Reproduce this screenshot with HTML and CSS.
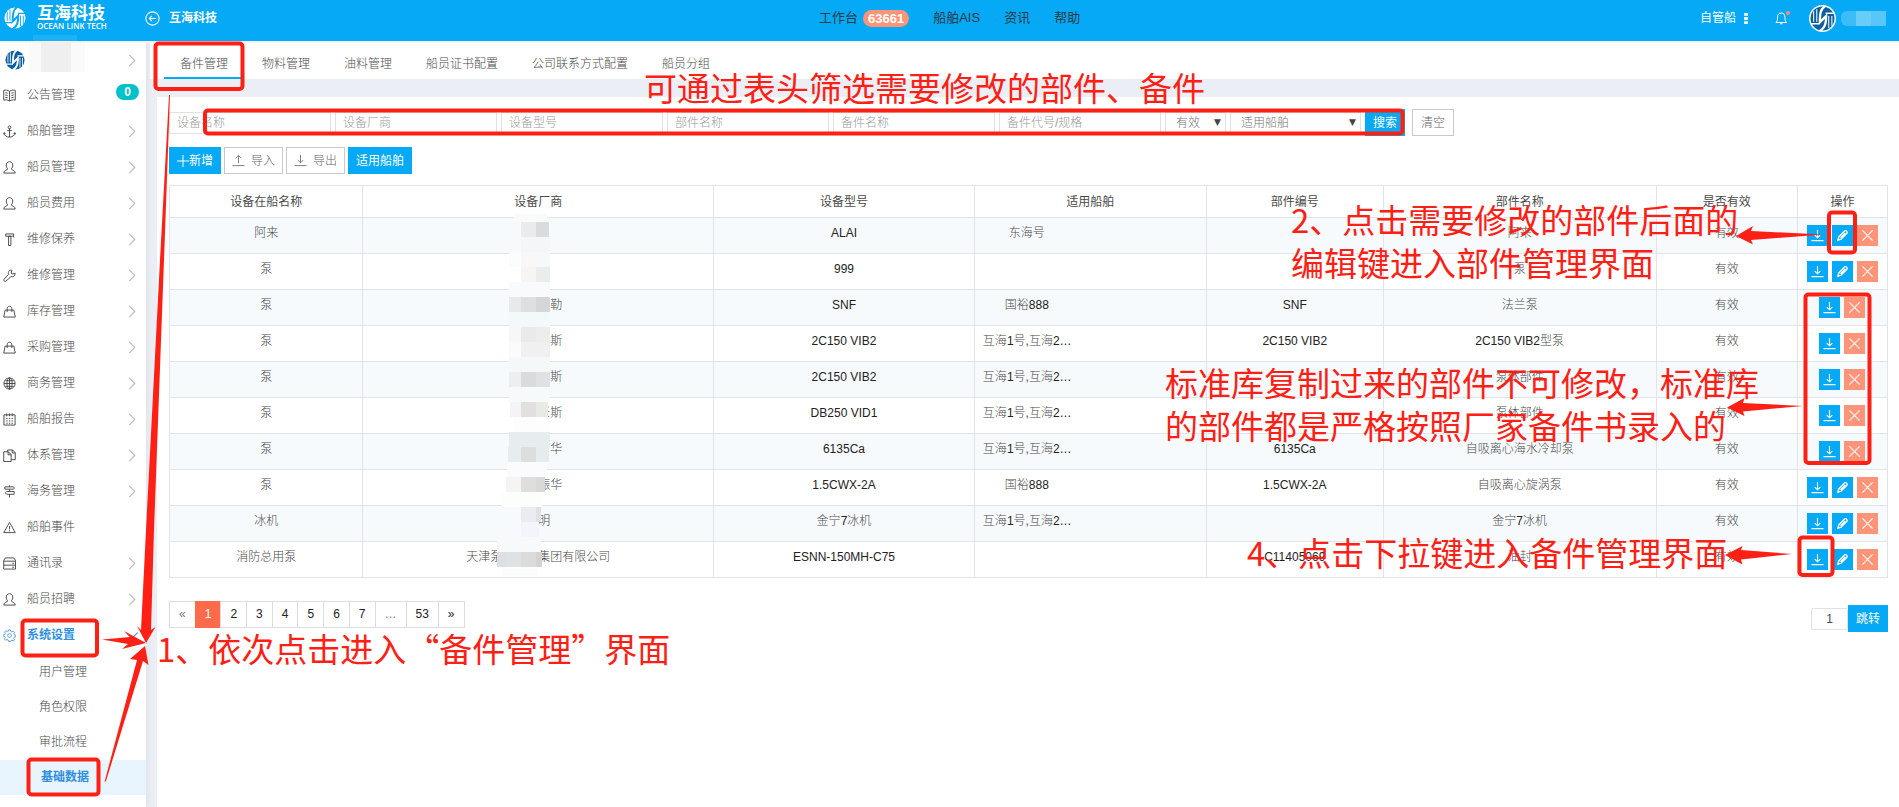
FILE: index.html
```
<!DOCTYPE html>
<html lang="zh-CN">
<head>
<meta charset="utf-8">
<title>互海科技</title>
<link rel="stylesheet" href="styles.css">
</head>
<body>
<svg class="defs" aria-hidden="true">
  <defs>
    <symbol id="logo" viewBox="0 0 24 24">
      <circle class="logo-disc" cx="12" cy="12" r="11.5"/>
      <path class="logo-line" d="M14.500 0C10 3 9.500 7 9.500 15.500L15.500 9.500C15.500 17 14.500 21 9.500 24" stroke-width="2.200"/>
      <path class="logo-line" d="M3.500 5v10M6.500 3v12M18 9.500V21M21 9.500V19" stroke-width="1"/>
      <path class="logo-line" d="M1 17h8M15 7h8" stroke-width="1.400"/>
    </symbol>
    <symbol id="chev" viewBox="0 0 8 14"><path d="M1 1l6 6-6 6"/></symbol>
    <symbol id="i-book" viewBox="0 0 14 14"><path d="M7 2.500C5 1 3 1 .8 1.500v10.500C3 11.500 5 11.500 7 13M7 2.500C9 1 11 1 13.200 1.500v10.500C11 11.500 9 11.500 7 13M7 2.500V13M2.500 4l2.500.4M2.500 6.500l2.500.4M2.500 9l2.500.4M11.500 4L9 4.400M11.500 6.500L9 6.900M11.500 9L9 9.400"/></symbol>
    <symbol id="i-anchor" viewBox="0 0 14 14"><circle cx="7" cy="2.500" r="1.500"/><path d="M7 4v9M4.500 6h5M1 8.500c.5 3 3 4.500 6 4.500s5.500-1.500 6-4.500M.5 10l.7-1.800 1.600 1.200M13.500 10l-.7-1.800-1.600 1.200"/></symbol>
    <symbol id="i-user" viewBox="0 0 14 14"><path d="M5.200 8.500C4 7.500 3.500 6 3.500 4.300 3.500 2 5 .8 7 .8s3.500 1.200 3.500 3.500c0 1.700-.5 3.200-1.700 4.200.3 1.300 4.400 1.200 4.400 4.500H.8c0-3.300 4.100-3.200 4.400-4.500z"/></symbol>
    <symbol id="i-hammer" viewBox="0 0 14 14"><path d="M3 1h8.500v3.500C11 3 10 3.500 9.500 3.500H3zM6 3.500h2.500V13.500H6z"/></symbol>
    <symbol id="i-wrench" viewBox="0 0 14 14"><path d="M9.500 1.200L8.800 4.500l.9.900 3.400-.8c.2 2.500-2 4.400-4.600 3.600L3.300 13c-1.500 1-3-.7-2.200-2L6 5.800C5 3 7 .8 9.500 1.200z"/></symbol>
    <symbol id="i-bag" viewBox="0 0 14 14"><path d="M2.300 5.500h9.400l1.500 7.500H.8zM4.500 7.500V4c0-3.500 5-3.500 5 0v3.500"/></symbol>
    <symbol id="i-globe" viewBox="0 0 14 14"><circle cx="7" cy="7" r="6"/><ellipse cx="7" cy="7" rx="2.800" ry="6"/><path d="M7 1v12M1 7h12M2.500 4h9M2.500 10h9"/></symbol>
    <symbol id="i-cal" viewBox="0 0 14 14"><path d="M1 2h12v11H1zM4 .5v3M7 .5v3M10 .5v3"/><path d="M3.500 6h1.500M6.300 6h1.500M9.200 6h1.500M3.500 8.500h1.500M6.300 8.500h1.500M9.200 8.500h1.500M3.500 11h1.500M6.300 11h1.500M9.200 11h1.500"/></symbol>
    <symbol id="i-files" viewBox="0 0 14 14"><path d="M.8 3h5l3 3v7.500h-8zM5.500 3v3.200h3.200M5 3V1h5.200l3 3v7.500H9M10 1v3.200h3.200"/></symbol>
    <symbol id="i-sign" viewBox="0 0 14 14"><path d="M2 2h9l1.500 1.200L11 4.500H2zM12 7H4L2.500 8.500 4 10h8zM7 .5V2M7 4.500V7M7 10v3.500"/></symbol>
    <symbol id="i-warn" viewBox="0 0 14 14"><path d="M7 1.500L13.200 12.500H.8zM7 5.500v3.500M7 10v1.200"/></symbol>
    <symbol id="i-server" viewBox="0 0 14 14"><path d="M2.500 1h9l2 2.500v9.500H.8V3.500zM.8 4.500h12.500M.8 8.800h12.500M10 6.700h2M10 11h2"/></symbol>
    <symbol id="i-gear" viewBox="0 0 14 14"><circle cx="7" cy="7" r="2"/><path d="M6 1h2l.4 1.700 1.200.5 1.500-.9 1.400 1.400-.9 1.500.5 1.200 1.700.4v1.600l-1.700.4-.5 1.200.9 1.500-1.400 1.400-1.500-.9-1.200.5L8 13.500H6l-.4-1.700-1.200-.5-1.500.9-1.400-1.400.9-1.500-.5-1.200L.4 7.900V6.300l1.700-.4.500-1.200-.9-1.500 1.400-1.400 1.500.9 1.200-.5z"/></symbol>
    <symbol id="i-down" viewBox="0 0 14 14"><path d="M7 1v8.500M4 6.500l3 3 3-3M.5 12.500h13"/></symbol>
    <symbol id="i-up" viewBox="0 0 14 14"><path d="M7 10V1.500M4 4.500l3-3 3 3M.5 12.500h13"/></symbol>
    <symbol id="i-edit" viewBox="0 0 14 14"><path d="M2 12l1-3.500L9.500 2c1-1 3.300 1.300 2.400 2.400L5.500 11zM5 9.300L10 4.300" stroke-width="1.500"/></symbol>
    <symbol id="i-x" viewBox="0 0 14 14"><path d="M1.500 1.500l11 11M12.500 1.500l-11 11"/></symbol>
  </defs>
</svg>

<header class="topbar">
  <div class="brand">
    <svg class="logo logo-light"><use href="#logo"/></svg>
    <div class="brand-text"><strong>互海科技</strong><small>OCEAN LINK TECH</small></div>
  </div>
  <a class="back" href="#">
    <svg viewBox="0 0 14 14"><circle cx="7" cy="7" r="6.200"/><path d="M10.500 7H4M6.500 4.500L4 7l2.500 2.500"/></svg>
    互海科技
  </a>
  <nav class="topnav">
    <a href="#">工作台<span class="count">63661</span></a>
    <a href="#">船舶AIS</a>
    <a href="#">资讯</a>
    <a href="#">帮助</a>
  </nav>
  <div class="account">
    <span class="fleet">自管船</span>
    <svg class="dots" viewBox="0 0 4 14"><path d="M0 1h4v3H0zM0 5.500h4v3H0zM0 10h4v3H0z"/></svg>
    <svg class="bell" viewBox="0 0 15 14"><path d="M1 11.500h10.500c-1.300-1.500-1.500-2.500-1.500-5C10 3.500 8.500 2 6.200 2S2.500 3.500 2.500 6.500c0 2.500-.2 3.500-1.500 5zM5 12.800h2.500"/><circle cx="13" cy="2" r="2"/></svg>
    <span class="avatar"><svg class="logo logo-dark"><use href="#logo"/></svg></span>
    <span class="hidden-name"><i></i><i></i><i></i></span>
  </div>
</header>

<div class="layout">
  <aside class="sidebar">
    <div class="profile"><svg class="logo logo-dark"><use href="#logo"/></svg><svg class="chev"><use href="#chev"/></svg></div>
    <nav class="menu">
      <a href="#"><svg class="ico"><use href="#i-book"/></svg>公告管理<span class="pill">0</span></a>
      <a href="#"><svg class="ico"><use href="#i-anchor"/></svg>船舶管理<svg class="chev"><use href="#chev"/></svg></a>
      <a href="#"><svg class="ico"><use href="#i-user"/></svg>船员管理<svg class="chev"><use href="#chev"/></svg></a>
      <a href="#"><svg class="ico"><use href="#i-user"/></svg>船员费用<svg class="chev"><use href="#chev"/></svg></a>
      <a href="#"><svg class="ico"><use href="#i-hammer"/></svg>维修保养<svg class="chev"><use href="#chev"/></svg></a>
      <a href="#"><svg class="ico"><use href="#i-wrench"/></svg>维修管理<svg class="chev"><use href="#chev"/></svg></a>
      <a href="#"><svg class="ico"><use href="#i-bag"/></svg>库存管理<svg class="chev"><use href="#chev"/></svg></a>
      <a href="#"><svg class="ico"><use href="#i-bag"/></svg>采购管理<svg class="chev"><use href="#chev"/></svg></a>
      <a href="#"><svg class="ico"><use href="#i-globe"/></svg>商务管理<svg class="chev"><use href="#chev"/></svg></a>
      <a href="#"><svg class="ico"><use href="#i-cal"/></svg>船舶报告<svg class="chev"><use href="#chev"/></svg></a>
      <a href="#"><svg class="ico"><use href="#i-files"/></svg>体系管理<svg class="chev"><use href="#chev"/></svg></a>
      <a href="#"><svg class="ico"><use href="#i-sign"/></svg>海务管理<svg class="chev"><use href="#chev"/></svg></a>
      <a href="#"><svg class="ico"><use href="#i-warn"/></svg>船舶事件</a>
      <a href="#"><svg class="ico"><use href="#i-server"/></svg>通讯录<svg class="chev"><use href="#chev"/></svg></a>
      <a href="#"><svg class="ico"><use href="#i-user"/></svg>船员招聘<svg class="chev"><use href="#chev"/></svg></a>
      <a class="open" href="#"><svg class="ico"><use href="#i-gear"/></svg>系统设置<svg class="chev"><use href="#chev"/></svg></a>
    </nav>
    <nav class="submenu">
      <a href="#">用户管理</a>
      <a href="#">角色权限</a>
      <a href="#">审批流程</a>
      <a class="current" href="#">基础数据</a>
    </nav>
  </aside>

  <main class="main">
    <nav class="tabs">
      <a class="current" href="#">备件管理</a>
      <a href="#">物料管理</a>
      <a href="#">油料管理</a>
      <a href="#">船员证书配置</a>
      <a href="#">公司联系方式配置</a>
      <a href="#">船员分组</a>
    </nav>
    <section class="panel">
      <form class="filters">
        <input type="text" aria-label="设备名称" placeholder="设备名称">
        <input type="text" aria-label="设备厂商" placeholder="设备厂商">
        <input type="text" aria-label="设备型号" placeholder="设备型号">
        <input type="text" aria-label="部件名称" placeholder="部件名称">
        <input type="text" aria-label="备件名称" placeholder="备件名称">
        <input type="text" aria-label="备件代号/规格" placeholder="备件代号/规格">
        <span class="pick pick-state"><select aria-label="是否有效"><option>有效</option></select></span>
        <span class="pick pick-ship"><select aria-label="适用船舶"><option>适用船舶</option></select></span>
        <button class="btn primary" type="button">搜索</button>
        <button class="btn clear" type="button">清空</button>
      </form>
      <div class="toolbar">
        <button class="btn primary" type="button"><svg class="plus" viewBox="0 0 12 12"><path d="M6 0v12M0 6h12"/></svg>新增</button>
        <button class="btn" type="button"><svg class="ico"><use href="#i-up"/></svg>导入</button>
        <button class="btn" type="button"><svg class="ico"><use href="#i-down"/></svg>导出</button>
        <button class="btn primary" type="button">适用船舶</button>
      </div>
      <table class="parts">
        <colgroup><col class="c1"><col class="c2"><col class="c3"><col class="c4"><col class="c5"><col class="c6"><col class="c7"><col class="c8"></colgroup>
        <thead>
          <tr><th>设备在船名称</th><th>设备厂商</th><th>设备型号</th><th>适用船舶</th><th>部件编号</th><th>部件名称</th><th>是否有效</th><th>操作</th></tr>
        </thead>
        <tbody id="rows"></tbody>
      </table>
      <div class="footer">
        <nav class="pager">
          <a class="mute" href="#">«</a><a class="current" href="#">1</a><a href="#">2</a><a href="#">3</a><a href="#">4</a><a href="#">5</a><a href="#">6</a><a href="#">7</a><span class="mute">…</span><a href="#">53</a><a href="#">»</a>
        </nav>
        <form class="jump"><input type="text" aria-label="页码" value="1"><button class="btn primary" type="button">跳转</button></form>
      </div>
    </section>
  </main>
</div>

<svg class="overlay" viewBox="0 0 1899 807" aria-hidden="true">
  <g id="mosaic"></g>
  <g class="frames">
    <rect x="155.500" y="43.500" width="87" height="45.500" rx="3"/>
    <rect x="205" y="110.500" width="1197.500" height="23" rx="3"/>
    <rect x="22.500" y="620.500" width="74.500" height="35" rx="3"/>
    <rect x="28.500" y="759.500" width="70" height="35" rx="3"/>
    <rect x="1829" y="212.500" width="26" height="40" rx="3"/>
    <rect x="1805.500" y="294.500" width="64" height="168.500" rx="3"/>
    <rect x="1799.500" y="537.500" width="33" height="37.500" rx="3"/>
  </g>
  <g class="arrows">
    <path d="M169 95L160 260 146 530 141 630 137 626 146 643 155.500 627 151 630 154 530 164 260 170 95z"/>
    <path d="M102 639.500L130 637 124 631 146 643 122 649 128 644z"/>
    <path d="M104.500 782L137 660 130 659 145 646 148.500 665 143 661 106 781z"/>
    <path d="M1823 234.500L1751 231 1753 226 1736 236 1753 244.500 1751 240z"/>
    <path d="M1803 406L1743 403 1744.500 398 1727 407.500 1744.500 416 1743 411.500z"/>
    <path d="M1792 554L1741 550 1742.500 546 1725 555 1742.500 564.500 1741 559.500z"/>
  </g>
</svg>
<p class="note note-filter">可通过表头筛选需要修改的部件、备件</p>
<p class="note note-edit">2、点击需要修改的部件后面的<br>编辑键进入部件管理界面</p>
<p class="note note-std">标准库复制过来的部件不可修改，标准库<br>的部件都是严格按照厂家备件书录入的</p>
<p class="note note-open">4、点击下拉键进入备件管理界面</p>
<p class="note note-path">1、依次点击进入“备件管理”界面</p>
<script src="app.js"></script>
</body>
</html>
```
FILE: styles.css
```
* { box-sizing: border-box; }
body {
  margin: 0;
  min-height: 100vh;
  display: flex;
  flex-direction: column;
  position: relative;
  background: #ebeef4;
  color: #4a4a4a;
  font: 300 12px/16px "Liberation Sans", "Noto Sans CJK SC", sans-serif;
}
a { color: inherit; text-decoration: none; }
svg { display: block; fill: none; stroke: currentColor; flex: none; }
input, select, button { font: inherit; color: inherit; margin: 0; }
.defs { position: absolute; width: 0; height: 0; }

.logo-disc { fill: var(--disc); stroke: none; }
.logo-line { stroke: var(--line); }
.logo-light { --disc: #fff; --line: #05a9f5; }
.logo-dark { --disc: #0e5f9e; --line: #fff; }

/* Top bar */
.topbar {
  display: flex;
  align-items: center;
  position: relative;
  height: 43px;
  padding: 0 13px 5px 4px;
  background: #05a9f5;
  border-bottom: 2px solid #f3f4f6;
  color: #fff;
}
.brand { display: flex; align-items: center; gap: 11px; width: 141px; }
.brand .logo { width: 22px; height: 22px; }
.brand-text { display: flex; flex-direction: column; }
.brand-text strong { font-size: 17px; line-height: 16px; font-weight: 700; }
.brand-text small { font: 600 8px/8px "Open Sans", sans-serif; }
.back { display: flex; align-items: center; gap: 9px; font-weight: 700; }
.back svg { width: 15px; height: 15px; }
.topnav {
  flex: 1;
  display: flex;
  gap: 24px;
  padding-left: 602px;
  color: #2b3a44;
  font-size: 13px;
  font-weight: 400;
}
.topnav a { display: flex; align-items: center; gap: 5px; }
.count {
  padding: 0 5px;
  border-radius: 9px;
  background: #ff9478;
  color: #fff;
  font-weight: 700;
  line-height: 17px;
}
.account { display: flex; align-items: center; }
.fleet { font-weight: 400; }
.dots { width: 4px; height: 13px; margin: 0 27px 0 8px; fill: #fff; stroke: none; }
.bell { width: 15px; height: 14px; margin-right: 19px; }
.bell circle { fill: #ff8a70; stroke: none; }
.avatar { padding: 1px; border-radius: 50%; background: #fff; }
.avatar .logo { width: 25px; height: 25px; }
.hidden-name { display: flex; margin-left: 5px; }
.hidden-name i { width: 15px; height: 15px; background: #58c6f8; }
.hidden-name i:first-child { background: #3cbdf7; border-radius: 6px 0 0 6px; }
.hidden-name i:nth-child(2) { background: #69cdf9; }

/* Side bar */
.layout { flex: 1; display: flex; align-items: stretch; }
.sidebar { flex: none; width: 146px; background: #fff; box-shadow: 2px 0 6px #0000000d; }
.profile, .menu a { display: flex; align-items: center; padding-right: 10px; }
.profile { height: 34px; padding-left: 5px; }
.profile .logo { width: 20px; height: 20px; }
.menu a { height: 36px; gap: 11px; padding-left: 3px; }
.ico { width: 13px; height: 13px; color: #444; }
.chev { width: 8px; height: 13px; margin-left: auto; color: #bbb; stroke-width: 1.200; }
.menu .open, .submenu .current { color: #2f8fdf; font-weight: 700; }
.open .ico { color: #5b9bd8; }
.open .chev { color: #2f8fdf; transform: rotate(90deg); }
.pill {
  align-self: flex-start;
  margin: 7px -3px 0 auto;
  width: 23px;
  border-radius: 8px;
  background: #00c0c8;
  color: #fff;
  font-weight: 700;
  line-height: 16px;
  text-align: center;
}
.submenu { padding-top: 2px; }
.submenu a { display: block; padding-left: 39px; line-height: 35px; }
.submenu .current { padding-left: 41px; background: #e8f4fe; }

/* Main area */
.main { flex: 1; min-width: 0; display: flex; flex-direction: column; padding-left: 4px; }
.tabs { display: flex; gap: 2px; height: 36px; padding-left: 14px; background: #fff; }
.tabs a { padding: 0 16px; line-height: 42px; }
.tabs .current { border-bottom: 2px solid #05a9f5; }
.panel { flex: 1; margin: 18px 0 0 7px; padding: 12px 11px 0 12px; background: #fff; }
.filters, .toolbar, .footer, .jump { display: flex; }
.filters { gap: 4px; align-items: center; }
.filters input, .pick select, .jump input {
  height: 22px;
  border: 1px solid #dfe2e5;
  background: #fff;
}
.filters input { width: 162px; padding: 0 7px; }
.filters input::placeholder { color: #999; }
.pick { position: relative; }
.pick select { display: block; width: 100%; padding: 0 10px; appearance: none; color: #777; }
.pick::after { content: "▼"; position: absolute; right: 5px; top: 3px; font: 9px/14px "DejaVu Sans", sans-serif; color: #444; }
.pick-state { width: 61px; }
.pick-ship { width: 131px; }
.btn {
  display: flex;
  align-items: center;
  gap: 6px;
  height: 27px;
  padding: 0 7px;
  border: 1px solid #c9c9c9;
  background: #fff;
  color: #666;
}
.btn .ico { color: #777; }
.primary { border-color: #05a9f5; background: #05a9f5; color: #fff; font-weight: 400; }
.clear { margin-left: 3px; padding: 0 8px; }
.plus { width: 12px; height: 12px; }
.toolbar { gap: 3px; margin: 11px 0; }
.toolbar .primary { gap: 0; }

.parts { width: 100%; table-layout: fixed; border-collapse: collapse; }
.c1 { width: 11.25%; }
.c2 { width: 20.42%; }
.c3 { width: 15.18%; }
.c4 { width: 13.5%; }
.c5 { width: 10.3%; }
.c6 { width: 15.88%; }
.c7 { width: 8.22%; }
.c8 { width: 5.25%; }
.parts th, .parts td { border: 1px solid #e1e4e8; text-align: center; }
.parts th { height: 32px; padding: 0; font-weight: 400; }
.parts td { height: 36px; padding: 7px 0; vertical-align: top; white-space: nowrap; }
.parts tbody tr:nth-child(odd) { background: #f6fafd; }
.latin { color: #222; }
.parts .ships { width: 88px; margin-left: 8px; }
.gap { display: inline-block; }
.ops { display: flex; justify-content: center; gap: 4px; }
.op { width: 21px; height: 21px; padding: 4px; border: 0; background: #05a9f5; color: #fff; }
.op svg { width: 13px; height: 13px; stroke-width: 1.200; }
.op.del { background: #ff9478; }

.footer { justify-content: space-between; padding-top: 23px; }
.pager { display: flex; height: 27px; }
.pager > * { margin-right: -1px; padding: 0 9px; border: 1px solid #ddd; color: #222; line-height: 25px; }
.pager .mute { color: #777; }
.pager .current { border-color: #ff6b4a; background: #ff6b4a; color: #fff; }
.jump { align-items: center; padding-top: 4px; }
.jump input { width: 37px; text-align: center; border-radius: 2px; }

/* Marks over the page */
.overlay { position: absolute; left: 0; top: 0; width: 1899px; height: 807px; pointer-events: none; stroke: none; }
.frames { fill: none; stroke: #ff2015; stroke-width: 4; }
.arrows { fill: #ff2015; }
.note {
  position: absolute;
  margin: 0;
  color: #ff2015;
  font: 400 33px/43px "Noto Sans CJK SC", sans-serif;
  white-space: nowrap;
}
.note-filter { left: 644px; top: 66px; }
.note-edit { left: 1291px; top: 198px; }
.note-std { left: 1165px; top: 361px; }
.note-open { left: 1247px; top: 531px; }
.note-path { left: 157px; top: 627px; }
```
FILE: app.js
```
// device, vendor (number = blank width), model, ships, part no., part name, editable
const data = [
  ['阿来', [], 'ALAI', '东海号', '', '阿来', true],
  ['泵', [], '999', '', '', '泵', true],
  ['泵', [36, '勒'], 'SNF', '国裕888', 'SNF', '法兰泵', false],
  ['泵', [36, '斯'], '2C150 VIB2', '互海1号,互海2…', '2C150 VIB2', '2C150 VIB2型泵', false],
  ['泵', [36, '斯'], '2C150 VIB2', '互海1号,互海2…', '', '泵体部件', false],
  ['泵', [24, '沃斯'], 'DB250 VID1', '互海1号,互海2…', '', '泵体部件', false],
  ['泵', [36, '华'], '6135Ca', '互海1号,互海2…', '6135Ca', '自吸离心海水冷却泵', false],
  ['泵', [24, '振华'], '1.5CWX-2A', '国裕888', '1.5CWX-2A', '自吸离心旋涡泵', true],
  ['冰机', [12, '明'], '金宁7冰机', '互海1号,互海2…', '', '金宁7冰机', true],
  ['消防总用泵', ['天津泵', 36, '集团有限公司'], 'ESNN-150MH-C75', '', 'C11405069', '油封', true]
];
const text = s => s.replace(/[A-Za-z0-9.…\-]+( [A-Z0-9]+)?/g, '<span class="latin">$&</span>');
const vendor = v => v.map(p => typeof p === 'number' ? `<span class="gap" style="width:${p}px"></span>` : p).join('');
const op = (icon, label, cls) => `<button type="button" class="op ${cls}" aria-label="${label}"><svg><use href="#${icon}"/></svg></button>`;
document.getElementById('rows').innerHTML = data.map(r => `<tr>
  <td>${r[0]}</td><td>${vendor(r[1])}</td><td>${text(r[2])}</td><td><div class="ships">${text(r[3])}</div></td>
  <td>${text(r[4])}</td><td>${text(r[5])}</td><td>有效</td>
  <td><div class="ops">${op('i-down', '下拉', '')}${r[6] ? op('i-edit', '编辑', '') : ''}${op('i-x', '删除', 'del')}</div></td></tr>`).join('');

// Blurred-out areas: x, y, width, height, colour
const blocks = [
  [29, 43, 56, 29, '#fafafa'], [41, 42, 30, 30, '#efeff0'], [33, 35, 44, 6, '#1cb0f5'],
  [513, 214, 34, 8, '#f9fbfb'], [521, 222, 15, 15, '#e9ebec'], [536, 222, 13, 15, '#d9dcdc'],
  [521, 237, 29, 15, '#f3f7fa'], [509, 252, 12, 15, '#fbfdfd'], [521, 252, 15, 15, '#f9f8f9'], [536, 252, 14, 15, '#f6f8fa'],
  [521, 267, 15, 15, '#f7f5f3'], [536, 267, 14, 15, '#ebedec'], [509, 282, 41, 15, '#f8fafd'],
  [509, 297, 12, 15, '#e7e9ea'], [521, 297, 15, 15, '#dddfe1'], [536, 297, 14, 15, '#d5d6d8'],
  [509, 312, 41, 15, '#f3f8fb'], [509, 327, 12, 15, '#f7f7f8'], [521, 327, 15, 15, '#ebeaeb'], [536, 327, 14, 15, '#eeedec'],
  [509, 342, 12, 15, '#fbfbfb'], [521, 342, 29, 15, '#f1f0f1'], [509, 357, 41, 15, '#f4f8f9'],
  [509, 372, 12, 15, '#eceeef'], [521, 372, 15, 15, '#d9dbdd'], [536, 372, 14, 15, '#dfe2e4'],
  [509, 387, 41, 15, '#f6fafb'], [510, 402, 11, 15, '#f4f4f4'], [521, 402, 15, 15, '#e1e0de'], [536, 402, 12, 15, '#e9e9e6'],
  [513, 417, 37, 15, '#fdfdfd'], [509, 432, 41, 15, '#e7edef'],
  [508, 447, 13, 15, '#e7edee'], [521, 447, 15, 15, '#dcdedd'], [536, 447, 13, 15, '#e6ecee'],
  [507, 462, 40, 15, '#fbfbfd'], [506, 477, 15, 15, '#f5f4f3'], [521, 477, 15, 15, '#dfdedc'], [536, 477, 9, 15, '#d9dad8'],
  [502, 492, 41, 15, '#fcfefe'], [521, 507, 15, 15, '#ebecef'], [536, 507, 5, 15, '#dfe1e4'],
  [521, 522, 18, 15, '#f2f6fb'], [497, 537, 44, 15, '#f8f9fa'],
  [497, 552, 9, 15, '#dfdfdf'], [506, 552, 15, 15, '#dde2e6'], [521, 552, 15, 15, '#dcdbdb'], [536, 552, 6, 15, '#d6d2d0'],
  [502, 567, 36, 8, '#fcfcfc']
];
document.getElementById('mosaic').innerHTML = blocks.map(([x, y, w, h, c]) =>
  `<rect x="${x}" y="${y}" width="${w}" height="${h}" fill="${c}"/>`).join('');
```
